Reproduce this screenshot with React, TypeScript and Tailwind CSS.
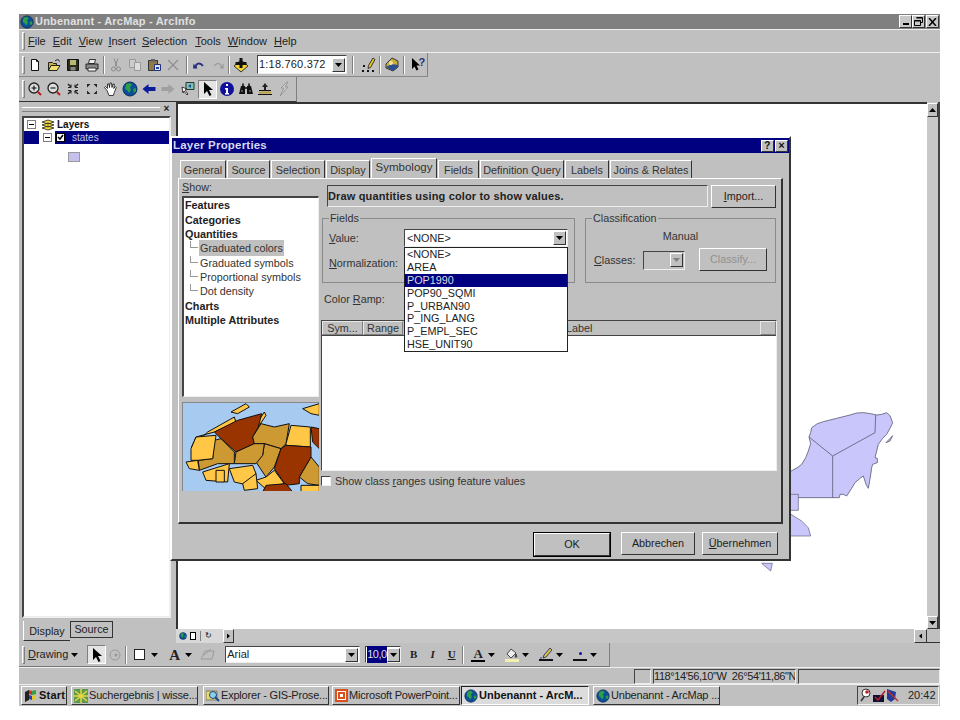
import React from "react";

const raised = "border border-t-white border-l-white border-r-[#333] border-b-[#333]";
const sunken = "border border-t-[#444] border-l-[#444] border-r-[#eee] border-b-[#eee]";
const thin = "border border-t-[#e8e8e8] border-l-[#e8e8e8] border-r-[#808080] border-b-[#808080]";

const U = ({ children }: { children: React.ReactNode }) => <span className="underline">{children}</span>;

const Svg = ({ children, w = 16, h = 16 }: { children: React.ReactNode; w?: number; h?: number }) => (
  <svg width={w} height={h} viewBox={`0 0 ${w} ${h}`} className="block shrink-0">
    {children}
  </svg>
);

const Globe = ({ size = 16 }: { size?: number }) => (
  <svg width={size} height={size} viewBox="0 0 16 16" className="block shrink-0">
    <circle cx="8" cy="8" r="7" fill="#0a4f9c" stroke="#0a2a55" />
    <path d="M4 3l4-1 2 2-2 2 1 3-2 3-2-3-2-1zM11 8l3-1 0 3-2 2z" fill="#2f9e44" />
  </svg>
);

const Caret = ({ color = "#000" }: { color?: string }) => (
  <svg width="7" height="4" viewBox="0 0 7 4" className="block shrink-0">
    <path d="M0 0h7L3.5 4z" fill={color} />
  </svg>
);

const icons: Record<string, React.ReactNode> = {
  new: <Svg><path d="M4.500 2.500h5l2 2v9h-7z" fill="#fff" stroke="#111" /><path d="M9.500 2.500v2h2" fill="none" stroke="#111" /></Svg>,
  open: <Svg><path d="M2.500 13.500v-8h4l1 1h3v7z" fill="#c9b040" stroke="#222" /><path d="M2.500 13.500l2.500-5h9l-3 5z" fill="#efe070" stroke="#222" /><path d="M9 4c2-2 4-1.500 4.500 .5" fill="none" stroke="#111" /></Svg>,
  save: <Svg><path d="M2.500 2.500h11v11h-11z" fill="#2c2c18" stroke="#111" /><path d="M5 3h6v5H5z" fill="#b8b878" /><path d="M5.500 10h5v3.500h-5z" fill="#888" /></Svg>,
  print: <Svg><path d="M5.500 2.500h6l-1 4h-6z" fill="#eee" stroke="#333" /><path d="M2 7h12v5H2z" fill="#8a8a8a" stroke="#222" /><path d="M4 11h8v3H4z" fill="#fff" stroke="#333" /></Svg>,
  cut: <Svg><path d="M6 1.500l3 8M10 1.500L7 9.500" stroke="#8a8a8a" fill="none" /><circle cx="5.500" cy="12" r="2" fill="none" stroke="#8a8a8a" /><circle cx="10.500" cy="12" r="2" fill="none" stroke="#8a8a8a" /></Svg>,
  copy: <Svg><path d="M2.500 2.500h6v8h-6z" fill="#ccc" stroke="#9a9a9a" /><path d="M7.500 5.500h6v8h-6z" fill="#ddd" stroke="#9a9a9a" /></Svg>,
  paste: <Svg><path d="M2.500 3.500h9v10h-9z" fill="#8f7a4a" stroke="#333" /><path d="M5 2h4v3H5z" fill="#666" /><path d="M8.500 7.500h6v6h-6z" fill="#dfe4f5" stroke="#223377" /><path d="M10 10h3v2h-3z" fill="#2244aa" /></Svg>,
  del: <Svg><path d="M3 3l10 10M13 3L3 13" stroke="#909090" strokeWidth="1.400" /></Svg>,
  undo: <Svg><path d="M5 11c-1-5 4-6 7-2" fill="none" stroke="#28307a" strokeWidth="1.800" /><path d="M2.500 6.500l4 5-4.500 0z" fill="#28307a" /></Svg>,
  redo: <Svg><path d="M11 11c1-5-4-6-7-2" fill="none" stroke="#a0a0a0" strokeWidth="1.500" /><path d="M13.500 6.500l-4 5 4.500 0z" fill="#a0a0a0" /></Svg>,
  add: <Svg><path d="M1 9l7-6 7 6-7 6z" fill="#f2d230" stroke="#333" /><path d="M6.500 1h3v4h4v3h-4v3h-3V8h-4V5h4z" fill="#111" /></Svg>,
  editor: <Svg><path d="M1 13h2v2H1zM6 13h2v2H6zM11 13h2v2h-2zM2 8h2v2H2z" fill="#111" /><path d="M12 1l2 1.500-4.500 8-2.500 1 .5-3z" fill="#e8c820" stroke="#333" /></Svg>,
  arc: <Svg><path d="M8 1l6 3v6l-5 4-7-3V7z" fill="#c9ad3f" stroke="#333" /><path d="M2 10l6-3 6 1v2l-5 4z" fill="#2e4f8f" /><circle cx="7" cy="6" r="2" fill="#f0e8a0" /></Svg>,
  help: <Svg><path d="M2 1v11l2.500-2.500 2 4 2-1-2-4h3.500z" fill="#000" /><text x="8.500" y="9" fontSize="11" fontWeight="700" fill="#28307a" fontFamily="Liberation Sans">?</text></Svg>,
  zin: <Svg><circle cx="7" cy="7" r="5" fill="#ddd" stroke="#222" strokeWidth="1.300" /><path d="M4.500 7h5M7 4.500v5" stroke="#000" /><path d="M11 11l3 3" stroke="#c01818" strokeWidth="2" /></Svg>,
  zout: <Svg><circle cx="7" cy="7" r="5" fill="#ddd" stroke="#222" strokeWidth="1.300" /><path d="M4.500 7h5" stroke="#000" /><path d="M11 11l3 3" stroke="#c01818" strokeWidth="2" /></Svg>,
  fixin: <Svg><path d="M3 3l3 3M13 3l-3 3M3 13l3-3M13 13l-3-3" stroke="#222" strokeWidth="1.400" /><path d="M6 3.500v3h-3M10 3.500v3h3M6 12.500v-3h-3M10 12.500v-3h3" fill="none" stroke="#222" /></Svg>,
  fixout: <Svg><path d="M3 3h3.500l-3.500 3.500zM13 3H9.500L13 6.500zM3 13h3.500L3 9.500zM13 13H9.500l3.500-3.500z" fill="#222" /></Svg>,
  hand: <Svg><path d="M4 9.500L1.500 6.500l1-1 2 2 0-4.500h1.500l.5 3.500.5-4.500h1.500l.5 4.500 1-3.500h1.300l-.5 4.500 1.500-2 1 1-2 5-1 3H6z" fill="#fff" stroke="#111" strokeWidth=".8" /></Svg>,
  globe: <Globe />,
  back: <Svg><path d="M1.500 8l6-5v3h7v4h-7v3z" fill="#0a1e9a" /></Svg>,
  fwd: <Svg><path d="M14.500 8l-6-5v3h-7v4h7v3z" fill="#a0a0a0" /></Svg>,
  goto: <Svg><path d="M7 1.500h8v7H7z" fill="#7cc4b8" stroke="#333" /><path d="M9 5l3-2v4z" fill="#1b4f8f" /><path d="M3 6l1 6 1-2 3 4 1-1-3-4 2-1z" fill="#fff" stroke="#111" strokeWidth=".8" /></Svg>,
  arrow: <Svg><path d="M4 1v12l3-3 2.500 5 2-1-2.500-5h4z" fill="#000" /></Svg>,
  info: <Svg><circle cx="8" cy="8" r="7" fill="#10109a" /><path d="M7 3h2v2H7zM6 7h3v5h1v1.500H6V12h1V8.500H6z" fill="#fff" /></Svg>,
  find: <Svg><path d="M1 13l2-8h4v8zM9 5h4l2 8H9z" fill="#111" /><path d="M4 2.500h2v2.500H4zM10 2.500h2v2.500h-2zM7 6h2v2H7z" fill="#333" /><path d="M3 10h2M11 10h2" stroke="#999" /></Svg>,
  measure: <Svg><path d="M2 9.500h12M1 13.500h14" stroke="#111" /><path d="M2 11.500h12" stroke="#bfa040" strokeWidth="2" /><path d="M8 2l3 4H9v3H7V6H5z" fill="#222" /></Svg>,
  bolt: <Svg><path d="M11 1L5 7h3L4 15l8-9H9l3-5z" fill="#d0d0d0" stroke="#8a8a8a" strokeWidth=".8" /></Svg>,
};

const Tool = ({ name, pressed }: { name: string; pressed?: boolean }) => (
  <div className={`w-[19px] h-[19px] flex items-center justify-center shrink-0 ${pressed ? "bg-[#e4e4e4] border border-t-[#808080] border-l-[#808080] border-r-white border-b-white" : ""}`}>
    {icons[name]}
  </div>
);

const Sep = () => <div className="w-[2px] h-[18px] mx-[1px] border-l border-l-[#808080] border-r border-r-white shrink-0" />;
const Handle = () => <div className="w-[3px] h-[18px] ml-[2px] mr-[10px] border border-t-white border-l-white border-r-[#808080] border-b-[#808080] shrink-0" />;

const ComboArrow = ({ disabled }: { disabled?: boolean }) => (
  <div className={`w-[13px] h-[14px] bg-[#c0c0c0] flex items-center justify-center shrink-0 ${raised}`}>
    <Caret color={disabled ? "#808080" : "#000"} />
  </div>
);

const Toolbars = () => (
  <>
    <div className="h-[24px] flex items-center pl-[1px] text-[11px] text-[#222] border-b border-b-[#eee] border-t border-t-[#eee]">
      <Handle />
      <div className="flex gap-[7px] ml-[-7px]">
        <span><U>F</U>ile</span>
        <span><U>E</U>dit</span>
        <span className="mr-[-1px]"><U>V</U>iew</span>
        <span className="mr-[-1px]"><U>I</U>nsert</span>
        <span className="mr-[1px]"><U>S</U>election</span>
        <span><U>T</U>ools</span>
        <span><U>W</U>indow</span>
        <span><U>H</U>elp</span>
      </div>
    </div>
    <div className="w-[409px] h-[24px] flex items-center pl-[1px] border-r border-r-[#808080] border-b border-b-[#888]">
      <Handle />
      <div className="flex items-center ml-[-10px]">
        <Tool name="new" /><Tool name="open" /><Tool name="save" /><Tool name="print" />
        <div className="w-[1px]" />
        <Sep />
        <Tool name="cut" /><Tool name="copy" /><Tool name="paste" /><Tool name="del" />
        <div className="w-[3px]" />
        <Sep />
        <Tool name="undo" /><Tool name="redo" />
        <Sep />
        <Tool name="add" />
        <div className={`ml-[7px] w-[90px] h-[19px] bg-white flex items-center justify-between pl-[1px] pr-[1px] text-[11px] text-[#222] tracking-[0.2px] ${sunken}`}>
          <span>1:18.760.372</span>
          <ComboArrow />
        </div>
        <div className="w-[4px]" />
        <Sep />
        <div className="w-[4px]" />
        <Tool name="editor" /><Sep /><Tool name="arc" /><div className="w-[1px]" /><Sep /><div className="w-[2px]" /><Tool name="help" />
      </div>
    </div>
    <div className="w-[278px] h-[25px] flex items-center pl-[1px] border-r border-r-[#808080] border-b border-b-[#333]">
      <Handle />
      <div className="flex items-center ml-[-10px]">
        {["zin", "zout", "fixin", "fixout", "hand", "globe", "back", "fwd", "goto"].map((n) => (
          <Tool key={n} name={n} />
        ))}
        <div className="w-[2px]" />
        <Tool name="arrow" pressed />
        {["info", "find", "measure", "bolt"].map((n) => (
          <Tool key={n} name={n} />
        ))}
      </div>
    </div>
  </>
);

const TocPanel = () => (
  <div className="w-[157px] shrink-0 flex flex-col pl-[3px] text-[#222]">
    <div className="h-[14px] flex items-center pr-[5px]">
      <div className="flex-1 h-[5px] border-t border-t-white border-b border-b-[#808080] mr-[2px]" />
      <div className="w-[9px] h-[10px] text-[10px] leading-[10px] font-bold text-center">×</div>
    </div>
    <div className={`w-[149px] h-[502px] bg-white ${sunken} border-2`}>
      <div className="flex items-center h-[13px] pl-[3px] text-[10px] font-bold text-[#111]">
        <div className="w-[9px] h-[9px] border border-[#808080] flex items-center justify-center mr-[5px]"><div className="w-[5px] h-[1px] bg-black" /></div>
        <svg width="14" height="12" viewBox="0 0 14 12" className="mr-[2px]"><path d="M1 3l6-2 6 2-6 2zM1 6l6-2 6 2-6 2zM1 9l6-2 6 2-6 2z" fill="#f4d838" stroke="#222" strokeWidth=".8" /></svg>
        Layers
      </div>
      <div className="flex items-center h-[13px] text-[10px] text-[#c8c8e8]">
        <div className="w-[15px] h-[13px] bg-[#000080]" />
        <div className="w-[9px] h-[9px] border border-[#808080] flex items-center justify-center ml-[4px] mr-[3px]"><div className="w-[5px] h-[1px] bg-black" /></div>
        <div className="flex-1 h-[13px] bg-[#000080] flex items-center pl-[1px]">
          <div className="w-[9px] h-[9px] bg-white border border-black flex items-center justify-center mr-[7px]">
            <svg width="7" height="7" viewBox="0 0 7 7"><path d="M1 3l2 2 3-4" fill="none" stroke="#000" strokeWidth="1.500" /></svg>
          </div>
          states
        </div>
      </div>
      <div className="w-[12px] h-[10px] mt-[8px] ml-[44px] bg-[#c5c0ee] border border-[#9a9a9a]" />
    </div>
    <div className="flex mt-[3px] text-[10.8px] pl-[1px]">
      <div className="w-[47px] h-[20px] flex items-center justify-center border-b border-b-[#333] border-l border-l-white pt-[2px]">Display</div>
      <div className="w-[43px] h-[17px] flex items-center justify-center border border-[#333] bg-[#c0c0c0]">Source</div>
    </div>
  </div>
);

const MexicoMap = () => (
  <svg width="220" height="180" viewBox="0 0 660 540" className="absolute left-[562px] top-[297px]">
    <path
      d="M150 212L172 200L185 190L197 170L205 150L212 128L207 108L212 95L215 80L232 68L250 62L290 52L330 42L350 36L370 35L392 38L410 42L425 40L440 35L450 44L458 65L450 82L440 100L428 112L415 130L410 150L405 170L412 172L412 185L398 190L395 200L392 222L385 262L378 250L370 225L360 232L345 245L335 262L320 285L310 280L300 280L298 290H150Z"
      fill="#c9c6fb"
      stroke="#5e5e78"
      strokeWidth="2.500"
    />
    <path d="M207 108L278 165L405 95L407 42M278 165V290" fill="none" stroke="#5e5e78" strokeWidth="2.500" />
    <path d="M438 125L458 104L450 120Z" fill="#c9c6fb" stroke="#5e5e78" strokeWidth="2.500" />
    <path d="M150 280H175V328H150ZM150 338L185 360L205 380L212 405H150ZM65 487H97L92 510Z" fill="#c9c6fb" stroke="#5e5e78" strokeWidth="2" />
  </svg>
);

const MapArea = () => (
  <div className="flex-1 flex flex-col min-w-0">
    <div className="flex-1 flex min-h-0">
      <div className="flex-1 relative bg-white border-t-2 border-t-[#333] border-l-2 border-l-[#333]">
        <MexicoMap />
      </div>
      <div className="w-[13px] flex flex-col justify-between bg-[#c8c8c8] border-r-2 border-r-[#444]">
        <div className={`h-[14px] mt-[1px] bg-[#c0c0c0] flex items-center justify-center ${raised}`}><div className="rotate-180"><Caret /></div></div>
        <div className={`h-[13px] bg-[#c0c0c0] flex items-center justify-center ${raised}`}><Caret /></div>
      </div>
    </div>
    <div className="h-[14px] flex items-center border-b border-b-[#333] text-[#111]">
      <div className="w-[47px] h-[14px] flex items-center gap-[3px] pl-[3px] bg-[#d8d8d8]">
        <Globe size={8} />
        <div className="w-[6px] h-[8px] bg-white border border-black" />
        <div className="w-[1px] h-[10px] bg-[#808080] mx-[1px]" />
        <div className="w-[8px] h-[8px] text-[8px] leading-[8px]">↻</div>
      </div>
      <div className={`w-[11px] h-[14px] bg-[#c0c0c0] flex items-center justify-center ${raised}`}><div className="-rotate-90 scale-75"><Caret /></div></div>
      <div className="flex-1 h-[14px] bg-[#c6c6c6]" />
      <div className={`w-[13px] h-[14px] bg-[#c0c0c0] flex items-center justify-center ${raised}`}><div className="rotate-90 scale-75"><Caret /></div></div>
      <div className="w-[13px]" />
    </div>
  </div>
);

const tabs = [
  { label: "General", cls: "w-[46px]" },
  { label: "Source", cls: "w-[43px]" },
  { label: "Selection", cls: "w-[54px]" },
  { label: "Display", cls: "w-[44px]" },
  { label: "Symbology", cls: "w-[66px]", active: true },
  { label: "Fields", cls: "w-[41px]" },
  { label: "Definition Query", cls: "w-[84px]" },
  { label: "Labels", cls: "w-[44px]" },
  { label: "Joins & Relates", cls: "w-[82px]" },
];

const showItems: { t: string; bold?: boolean; sel?: boolean; sub?: boolean }[] = [
  { t: "Features", bold: true },
  { t: "Categories", bold: true },
  { t: "Quantities", bold: true },
  { t: "Graduated colors", sub: true, sel: true },
  { t: "Graduated symbols", sub: true },
  { t: "Proportional symbols", sub: true },
  { t: "Dot density", sub: true },
  { t: "Charts", bold: true },
  { t: "Multiple Attributes", bold: true },
];

const fieldItems = ["<NONE>", "AREA", "POP1990", "POP90_SQMI", "P_URBAN90", "P_ING_LANG", "P_EMPL_SEC", "HSE_UNIT90"];

const PreviewMap = () => (
  <svg width="137" height="89" viewBox="36 33 411 267" className="block" stroke="#111" strokeWidth="3" strokeLinejoin="round">
    <rect x="36" y="33" width="411" height="267" fill="#a6caf0" stroke="none" />
    <path d="M180 60L225 35L235 45L200 65ZM395 50L445 35V70L420 65ZM255 98L280 60L285 70L265 100Z" fill="#ffc745" />
    <path d="M62 165L110 120L190 75L195 92L130 120L75 135Z" fill="#ffc745" />
    <path d="M130 120L200 85L272 65L262 105L245 135L250 155L195 180L150 140Z" fill="#993300" />
    <path d="M245 135L270 95L310 105L355 95L345 155L330 170L280 155L250 155Z" fill="#cc9933" />
    <path d="M345 155L360 100L418 105L418 165L345 160Z" fill="#ffc745" />
    <path d="M420 105L445 110V170L425 150Z" fill="#993300" />
    <path d="M280 155L330 170L310 225L285 255L255 210L275 190Z" fill="#cc9933" />
    <path d="M195 180L250 155L280 155L275 190L255 215L190 215Z" fill="#cc9933" />
    <path d="M130 145L150 140L190 180L190 215L140 215L85 235L82 205L125 200Z" fill="#cc9933" />
    <path d="M60 170L75 135L135 130L125 200L80 205L60 205Z" fill="#ffc745" />
    <path d="M45 210L80 205L85 235L55 230Z" fill="#ffc745" />
    <path d="M420 195L445 225V280L410 275L385 255Z" fill="#cc9933" />
    <path d="M330 170L345 160L420 165L420 195L385 255L385 275L345 280L310 230Z" fill="#993300" />
    <path d="M175 230L245 220L255 245L225 278L190 270Z" fill="#ffc745" />
    <path d="M95 240L175 215L170 270L105 265Z" fill="#ffc745" />
    <path d="M135 235H160V270H135Z" fill="#ffc745" />
    <path d="M255 265L285 255L310 235L340 275L280 287Z" fill="#ffc745" />
    <path d="M215 275L255 245L260 290L220 295Z" fill="#ffc745" />
    <path d="M275 300L285 280L345 275L365 300Z" fill="#993300" />
    <path d="M390 280L445 280V300H390Z" fill="#ffc745" />
  </svg>
);

const DialogButton = ({ cls, children }: { cls: string; children: React.ReactNode }) => (
  <div className={`h-[23px] flex items-center justify-center text-[#222] ${raised} ${cls}`}>{children}</div>
);

const LayerProperties = () => (
  <div className="absolute left-[170px] top-[136px] w-[621px] h-[425px] bg-[#c0c0c0] text-[#333] text-[10.8px] border-2 border-t-white border-l-white border-r-[#333] border-b-[#333]">
    <div className="h-[15px] bg-[#000080] flex items-center justify-between pl-[1px] pr-[1px] text-[#d8d8f0] text-[11.5px] font-bold tracking-[0.2px]">
      <span>Layer Properties</span>
      <div className="flex gap-[1px]">
        <div className={`w-[13px] h-[12px] bg-[#c0c0c0] text-[#111] text-[10px] leading-[10px] text-center ${raised}`}>?</div>
        <div className={`w-[13px] h-[12px] bg-[#c0c0c0] text-[#111] text-[11px] leading-[9px] text-center ${raised}`}>×</div>
      </div>
    </div>

    <div className="flex items-end h-[21px] pl-[8px] gap-[1px] mt-[4px]">
      {tabs.map((tab) => (
        <div
          key={tab.label}
          className={`flex items-center justify-center border-t border-t-white border-l border-l-white border-r border-r-[#333] ${tab.cls} ${tab.active ? "h-[20px] pb-[2px] text-[11.5px]" : "h-[18px] pt-[1px]"}`}
        >
          {tab.label}
        </div>
      ))}
    </div>

    <div className="ml-[6px] w-[605px] h-[346px] flex border-t border-t-white border-l border-l-white border-r-2 border-r-[#333] border-b-2 border-b-[#333]">
      <div className="w-[137px] ml-[3px] shrink-0 flex flex-col">
        <div className="h-[17px] pt-[1px] leading-[14px]"><U>S</U>how:</div>
        <div className={`h-[201px] bg-white text-[#333] ${sunken} border-t-2 border-l-2`}>
          {showItems.map((item) => (
            <div key={item.t} className={`h-[14.4px] flex items-center ${item.bold ? "font-bold text-[#222]" : ""}`}>
              {item.sub && <div className="w-[8px] h-[7px] self-start ml-[6px] mr-[1px] border-l border-l-[#999] border-b border-b-[#999]" />}
              <span className={item.sel ? "bg-[#c0c0c0] px-[1px]" : "px-[1px]"}>{item.t}</span>
            </div>
          ))}
        </div>
        <div className="mt-[5px] h-[89px] border-t border-l border-[#888] overflow-hidden">
          <PreviewMap />
        </div>
      </div>

      <div className="w-[456px] ml-[2px] shrink-0 flex flex-col pt-[6px]">
        <div className="flex pl-[6px]">
          <div className={`w-[381px] h-[22px] flex items-center font-bold text-[#222] tracking-[0.15px] text-[11px] ${sunken} border-[#aaa]`}>
            Draw quantities using color to show values.
          </div>
          <DialogButton cls="ml-[3px] w-[65px] h-[23px]"><span><U>I</U>mport...</span></DialogButton>
        </div>

        <div className="flex mt-[4px] gap-[10px]">
          <fieldset className="w-[253px] h-[71px] ml-[1px] border border-[#8a8a8a] pl-[6px]">
            <legend className="px-[1px] leading-[13px]">Fields</legend>
            <div className="flex items-center h-[18px] mt-[4px]">
              <span className="w-[75px]"><U>V</U>alue:</span>
              <div className={`w-[164px] h-[18px] bg-white flex items-center justify-between pl-[2px] pr-[1px] text-[#222] ${sunken}`}>
                <span>&lt;NONE&gt;</span>
                <ComboArrow />
              </div>
            </div>
            <div className="flex items-center h-[18px] mt-[7px]">
              <span><U>N</U>ormalization:</span>
            </div>
          </fieldset>
          <fieldset className="w-[191px] h-[71px] border border-[#8a8a8a] pl-[8px]">
            <legend className="ml-[-2px] px-[1px] leading-[13px]">Classification</legend>
            <div className="h-[14px] mt-[3px] pr-[8px] text-center">Manual</div>
            <div className="flex items-center mt-[6px]">
              <span className="w-[49px] mt-[1px]"><U>C</U>lasses:</span>
              <div className={`w-[42px] h-[19px] mt-[1px] bg-[#c0c0c0] flex items-center justify-end pr-[1px] ${sunken}`}>
                <ComboArrow disabled />
              </div>
              <div className={`ml-[14px] w-[68px] h-[23px] flex items-center justify-center text-[#909090] ${raised}`}>Classify...</div>
            </div>
          </fieldset>
        </div>

        <div className="h-[37px] flex items-center"><span className="ml-[3px] mt-[-4px]">Color <U>R</U>amp:</span></div>

        <div className={`h-[151px] w-[456px] bg-white ${sunken} border-[#777]`}>
          <div className="h-[15px] flex bg-[#c0c0c0] border-b border-b-[#444] text-[#333]">
            <div className={`w-[41px] flex items-center justify-center ${thin}`}>Sym...</div>
            <div className={`w-[40px] flex items-center justify-center ${thin}`}>Range</div>
            <div className="flex-1 pl-[163px] leading-[14px]">Label</div>
            <div className={`w-[16px] ${thin}`} />
          </div>
        </div>

        <div className="flex items-center mt-[4px] h-[12px]">
          <div className={`w-[10px] h-[10px] bg-white ${sunken}`} />
          <span className="ml-[4px]">Show class <U>r</U>anges using feature values</span>
        </div>
      </div>
    </div>

    <div className="flex justify-end mt-[8px] pr-[11px]">
      <div className="border border-black mr-[10px]"><DialogButton cls="w-[76px] h-[21px]">OK</DialogButton></div>
      <DialogButton cls="w-[74px] mr-[7px]">Abbrechen</DialogButton>
      <DialogButton cls="w-[76px]"><span><U>Ü</U>bernehmen</span></DialogButton>
    </div>

    <div className="absolute left-[232px] top-[109px] w-[164px] h-[105px] bg-white border border-[#222] text-[#222] z-10">
      {fieldItems.map((f) => (
        <div key={f} className={`h-[12.9px] leading-[13px] pl-[2px] ${f === "POP1990" ? "bg-[#000080] text-[#ddd]" : ""}`}>{f}</div>
      ))}
    </div>
  </div>
);

const DrawCaret = () => <div className="ml-[3px] shrink-0"><Caret /></div>;

const DrawingBar = () => (
  <div className="h-[25px] flex items-center text-[#222] border-b border-b-[#eee] text-[11px]">
    <div className="w-[591px] h-[24px] flex items-center pl-[1px] border-r border-r-[#808080] border-b border-b-[#777]">
      <Handle />
      <span className="ml-[-7px] mr-[3px]"><U>D</U>rawing</span>
      <Caret />
      <div className="w-[9px]" />
      <Tool name="arrow" pressed />
      <div className="w-[16px] h-[16px] flex items-center justify-center mx-[1px]">
        <svg width="14" height="14" viewBox="0 0 14 14"><circle cx="7" cy="7" r="5" fill="none" stroke="#999" /><circle cx="8" cy="7" r="1.500" fill="#999" /></svg>
      </div>
      <Sep />
      <div className="w-[6px]" />
      <div className="w-[11px] h-[11px] bg-white border border-[#222] mr-[6px]" />
      <Caret />
      <div className="w-[11px]" />
      <span className="font-['Liberation_Serif',serif] font-bold text-[15px] leading-[16px] mr-[5px]">A</span>
      <Caret />
      <div className="w-[8px]" />
      <svg width="15" height="13" viewBox="0 0 15 13" className="mr-[3px] shrink-0"><path d="M1 11L5 3h9l-2 8zM4 7l7-6" fill="none" stroke="#9a9a9a" /></svg>
      <div className={`w-[135px] h-[17px] ml-[7px] bg-white flex items-center justify-between pl-[1px] pr-[1px] ${sunken}`}>
        <span>Arial</span>
        <ComboArrow />
      </div>
      <div className={`w-[36px] h-[17px] ml-[5px] bg-white flex items-center justify-between pl-[1px] pr-[1px] ${sunken}`}>
        <span className="bg-[#000080] text-[#ddd] tracking-[-0.5px]">10,0</span>
        <ComboArrow />
      </div>
      <div className="flex items-center font-['Liberation_Serif',serif] text-[11px] font-bold">
        <span className="w-[19px] text-center ml-[3px]">B</span>
        <span className="w-[19px] text-center italic">I</span>
        <span className="w-[19px] text-center underline">U</span>
      </div>
      <Sep />
      <div className="w-[6px]" />
      <div className="flex flex-col items-center w-[14px]">
        <span className="font-['Liberation_Serif',serif] font-bold text-[13px] leading-[13px]">A</span>
        <div className="w-[14px] h-[2px] bg-black" />
      </div>
      <DrawCaret />
      <div className="w-[10px]" />
      <div className="flex flex-col items-center w-[14px]">
        <svg width="12" height="11" viewBox="0 0 12 11"><path d="M5 1L1 6l4 4 5-5zM10 6l1 3-2 0z" fill="#eee" stroke="#222" strokeWidth=".8" /></svg>
        <div className="w-[14px] h-[3px] bg-[#f0f0b0]" />
      </div>
      <DrawCaret />
      <div className="w-[10px]" />
      <div className="flex flex-col items-center w-[14px]">
        <svg width="12" height="11" viewBox="0 0 12 11"><path d="M10 0l2 2-6 7-3 1 1-3zM0 10h2" fill="#d8c040" stroke="#1a1a6a" strokeWidth=".8" /></svg>
        <div className="w-[14px] h-[2px] bg-[#111]" />
      </div>
      <DrawCaret />
      <div className="w-[10px]" />
      <div className="flex flex-col items-center w-[14px] gap-[4px]">
        <div className="w-[3px] h-[3px] rounded-full bg-[#10109a] mt-[4px]" />
        <div className="w-[14px] h-[2px] bg-[#111]" />
      </div>
      <DrawCaret />
    </div>
  </div>
);

const StatusBar = () => (
  <div className="h-[17px] flex items-center justify-end gap-[2px] text-[11px] text-[#222] border-b border-b-[#eee]">
    <div className={`w-[17px] h-[15px] ${sunken} border-[#999]`} />
    <div className={`w-[143px] h-[15px] leading-[13px] overflow-hidden whitespace-nowrap tracking-[-0.4px] ${sunken} border-[#999]`}>118°14'56,10"W&nbsp; 26°54'11,86"N</div>
    <div className={`w-[142px] h-[15px] ${sunken} border-[#999]`} />
  </div>
);

const taskItems: { label: string; cls: string; icon: React.ReactNode; active?: boolean }[] = [
  {
    label: "Suchergebnis | wisse...",
    cls: "w-[127px] ml-[4px] tracking-[-0.2px]",
    icon: <svg width="14" height="14" viewBox="0 0 14 14" className="shrink-0"><rect width="14" height="14" fill="#5c9a54" /><path d="M1 2l12 10M13 2L1 12M7 0v14M0 7h14" stroke="#e8d840" strokeWidth="1.500" /></svg>,
  },
  {
    label: "Explorer - GIS-Prose...",
    cls: "w-[126px] ml-[5px] tracking-[-0.2px]",
    icon: <svg width="14" height="14" viewBox="0 0 14 14" className="shrink-0"><path d="M0 2h11v9H0z" fill="#e8d870" stroke="#444" strokeWidth=".6" /><circle cx="7" cy="6" r="3.500" fill="#8ad0e8" stroke="#1a4a8a" /><path d="M9 8l4 4" stroke="#1a4a8a" strokeWidth="2" /></svg>,
  },
  {
    label: "Microsoft PowerPoint...",
    cls: "w-[128px] ml-[3px] tracking-[-0.2px]",
    icon: <svg width="13" height="13" viewBox="0 0 13 13" className="shrink-0"><rect width="13" height="13" fill="#d8501c" /><rect x="2.500" y="2.500" width="8" height="8" fill="none" stroke="#fff" /><path d="M5 5h3v3H5z" fill="#fff" /></svg>,
  },
  { label: "Unbenannt - ArcM...", cls: "w-[128px] ml-[1px]", icon: <Globe size={14} />, active: true },
  { label: "Unbenannt - ArcMap ...", cls: "w-[127px] ml-[4px] tracking-[-0.2px]", icon: <Globe size={14} /> },
];

const Taskbar = () => (
  <div className="h-[21px] flex items-center pl-[2px] text-[11px] text-[#222]">
    <div className={`w-[46px] h-[19px] flex items-center pl-[2px] gap-[1px] font-bold text-[#111] tracking-[0.2px] ${raised}`}>
      <svg width="14" height="14" viewBox="0 0 14 14" className="shrink-0">
        <path d="M1 3l4-2v10l-4 2z" fill="#222" />
        <path d="M5 1l3 1v4L5 5z" fill="#d83020" />
        <path d="M8 2l4-1v4L8 6z" fill="#30a040" />
        <path d="M5 6l3 1v4l-3-1z" fill="#2040c0" />
        <path d="M8 7l4-1v4l-4 1z" fill="#e8c820" />
      </svg>
      Start
    </div>
    {taskItems.map((t) => (
      <div
        key={t.label}
        className={`h-[19px] flex items-center pl-[2px] gap-[1px] whitespace-nowrap overflow-hidden ${t.cls} ${
          t.active ? "font-bold text-[#111] bg-[#dcdcdc] border border-t-[#222] border-l-[#222] border-r-white border-b-white" : raised
        }`}
      >
        {t.icon}
        {t.label}
      </div>
    ))}
    <div className={`ml-auto mr-[1px] w-[82px] h-[19px] flex items-center pl-[2px] ${sunken} border-[#aaa]`}>
      <svg width="42" height="15" viewBox="0 0 42 15" className="shrink-0">
        <circle cx="6" cy="5" r="4" fill="#fff" stroke="#333" />
        <circle cx="7" cy="4" r="1.800" fill="#c02020" />
        <path d="M4 9l-3 4" stroke="#333" strokeWidth="1.500" />
        <path d="M13 7h11v7H13z" fill="#101030" />
        <path d="M15 9l3 3 7-9" fill="none" stroke="#b02030" strokeWidth="1.500" />
        <path d="M27 1l9 3-1 7-4 3-4-3z" fill="#223a9a" />
        <path d="M28 3l10 10" stroke="#c03030" strokeWidth="1.500" />
      </svg>
      <span className="ml-[6px]">20:42</span>
    </div>
  </div>
);

const App = () => {
  return (
    <div className="relative w-[960px] h-[720px] bg-white overflow-hidden pt-[14px] pl-[19px] font-['Liberation_Sans',Arial,sans-serif]">
      <div className="w-[921px] h-[692px] bg-[#c0c0c0] flex flex-col">
        <div className="h-[15px] bg-[#808080] flex items-center justify-between pl-[1px] text-[#e0e0e0] text-[11px] font-bold tracking-[0.2px] shrink-0">
          <div className="flex items-center gap-[1px]"><Globe size={14} />Unbenannt - ArcMap - ArcInfo</div>
          <div className="flex mr-[1px]">
            <div className={`w-[13px] h-[13px] bg-[#c8c8c8] flex items-end justify-center pb-[2px] ${raised}`}><div className="w-[6px] h-[2px] bg-black" /></div>
            <div className={`w-[13px] h-[13px] bg-[#c8c8c8] flex items-center justify-center ${raised}`}>
              <svg width="9" height="9" viewBox="0 0 9 9"><path d="M2.500 .5h6v5h-2M.5 3.500h6v5h-6z" fill="none" stroke="#000" /><path d="M2.500 1h6M.5 4h6" stroke="#000" /></svg>
            </div>
            <div className={`w-[13px] h-[13px] ml-[1px] bg-[#c8c8c8] flex items-center justify-center ${raised}`}>
              <svg width="9" height="8" viewBox="0 0 9 8"><path d="M1 0l7 8M8 0L1 8" stroke="#000" strokeWidth="1.500" /></svg>
            </div>
          </div>
        </div>
        <Toolbars />
        <div className="h-[541px] flex shrink-0">
          <TocPanel />
          <MapArea />
        </div>
        <DrawingBar />
        <StatusBar />
        <Taskbar />
      </div>
      <LayerProperties />
    </div>
  );
};

export default App;
